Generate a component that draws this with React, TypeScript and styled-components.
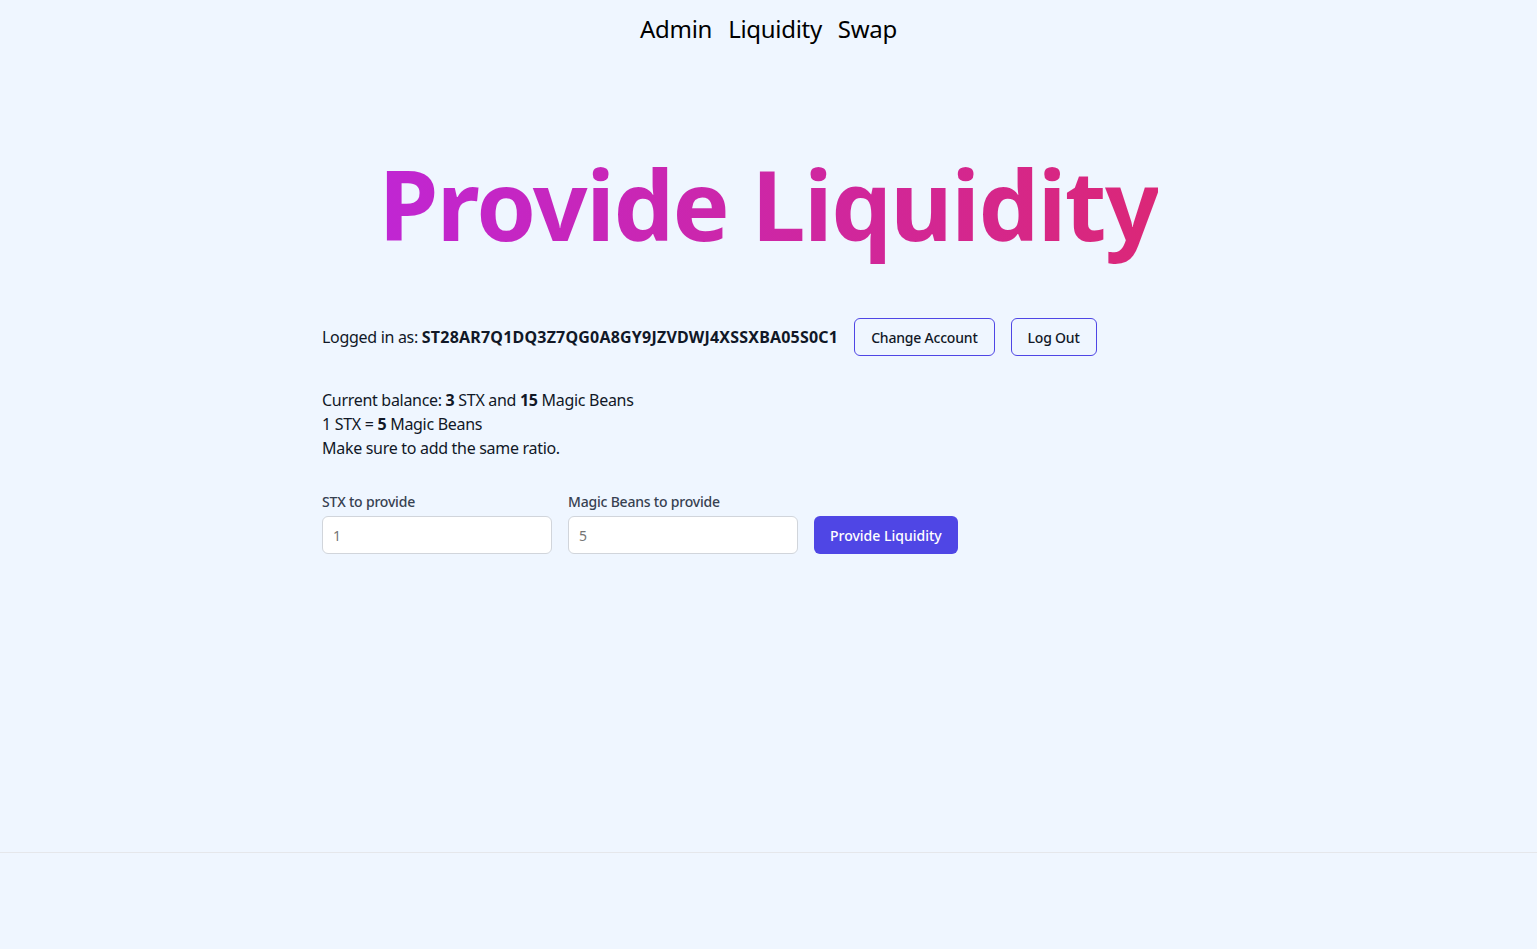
import React from "react";
import styled, { createGlobalStyle } from "styled-components";

const Global = createGlobalStyle`
  html, body { margin: 0; padding: 0; background: #eff6ff; }
  body { font-family: "Noto Sans", "Open Sans", sans-serif; color: #111827; }
  * { box-sizing: border-box; }
`;

const Page = styled.div`
  min-height: 949px;
  display: flex;
  flex-direction: column;
`;

const Main = styled.main`
  height: 853px;
  border-bottom: 1px solid #e5e7eb;
`;

const Nav = styled.nav`
  display: flex;
  justify-content: center;
  gap: 16px;
  padding-top: 13px;
`;

const NavLink = styled.a`
  font-size: 24px;
  line-height: 32px;
  letter-spacing: -0.3px;
  color: #000;
  text-decoration: none;
`;

const HeroWrap = styled.div`
  display: flex;
  justify-content: center;
  margin-top: 111px;
`;

const Title = styled.h1`
  margin: 0;
  font-size: 96px;
  line-height: 1;
  font-weight: 700;
  letter-spacing: -1.5px;
  background: linear-gradient(to right, #c026d3, #db2777);
  -webkit-background-clip: text;
  background-clip: text;
  color: transparent;
  padding-bottom: 14px;
`;

const Content = styled.section`
  width: 893px;
  margin: 52px auto 0;
  display: flex;
  flex-direction: column;
  gap: 32px;
`;

const AccountRow = styled.div`
  display: flex;
  align-items: center;
  gap: 16px;
  font-size: 16px;
  letter-spacing: -0.3px;
`;

const Bold = styled.b`
  font-weight: 700;
`;

const Address = styled.b`
  font-weight: 700;
  letter-spacing: 0.2px;
`;

const OutlineButton = styled.button`
  height: 38px;
  padding: 0 16px;
  border: 1px solid #4f46e5;
  border-radius: 6px;
  background: transparent;
  font-family: inherit;
  font-size: 14px;
  font-weight: 500;
  letter-spacing: -0.2px;
  color: #111827;
`;

const Info = styled.div`
  font-size: 16px;
  line-height: 24px;
  letter-spacing: -0.3px;
`;

const Form = styled.div`
  display: flex;
  align-items: flex-end;
  gap: 16px;
`;

const Field = styled.label`
  display: flex;
  flex-direction: column;
  gap: 4px;
  width: 230px;
`;

const Label = styled.span`
  font-size: 14px;
  line-height: 20px;
  font-weight: 500;
  letter-spacing: -0.2px;
  color: #374151;
`;

const Input = styled.input`
  height: 38px;
  border: 1px solid #d1d5db;
  border-radius: 6px;
  background: #fff;
  padding: 0 10px;
  font-family: inherit;
  font-size: 14px;
  color: #6b7280;
  outline: none;
`;

const PrimaryButton = styled.button`
  height: 38px;
  padding: 0 16px;
  border: none;
  border-radius: 6px;
  background: #4f46e5;
  color: #fff;
  font-family: inherit;
  font-size: 14px;
  font-weight: 500;
`;

export default function App() {
  return (
    <Page>
      <Global />
      <Main>
        <Nav>
          <NavLink href="#">Admin</NavLink>
          <NavLink href="#">Liquidity</NavLink>
          <NavLink href="#">Swap</NavLink>
        </Nav>
        <HeroWrap>
          <Title>Provide Liquidity</Title>
        </HeroWrap>
        <Content>
          <AccountRow>
            <span>
              Logged in as: <Address>ST28AR7Q1DQ3Z7QG0A8GY9JZVDWJ4XSSXBA05S0C1</Address>
            </span>
            <OutlineButton>Change Account</OutlineButton>
            <OutlineButton>Log Out</OutlineButton>
          </AccountRow>
          <Info>
            <div>
              Current balance: <Bold>3</Bold> STX and <Bold>15</Bold> Magic Beans
            </div>
            <div>
              1 STX = <Bold>5</Bold> Magic Beans
            </div>
            <div>Make sure to add the same ratio.</div>
          </Info>
          <Form>
            <Field>
              <Label>STX to provide</Label>
              <Input placeholder="1" />
            </Field>
            <Field>
              <Label>Magic Beans to provide</Label>
              <Input placeholder="5" />
            </Field>
            <PrimaryButton>Provide Liquidity</PrimaryButton>
          </Form>
        </Content>
      </Main>
    </Page>
  );
}
